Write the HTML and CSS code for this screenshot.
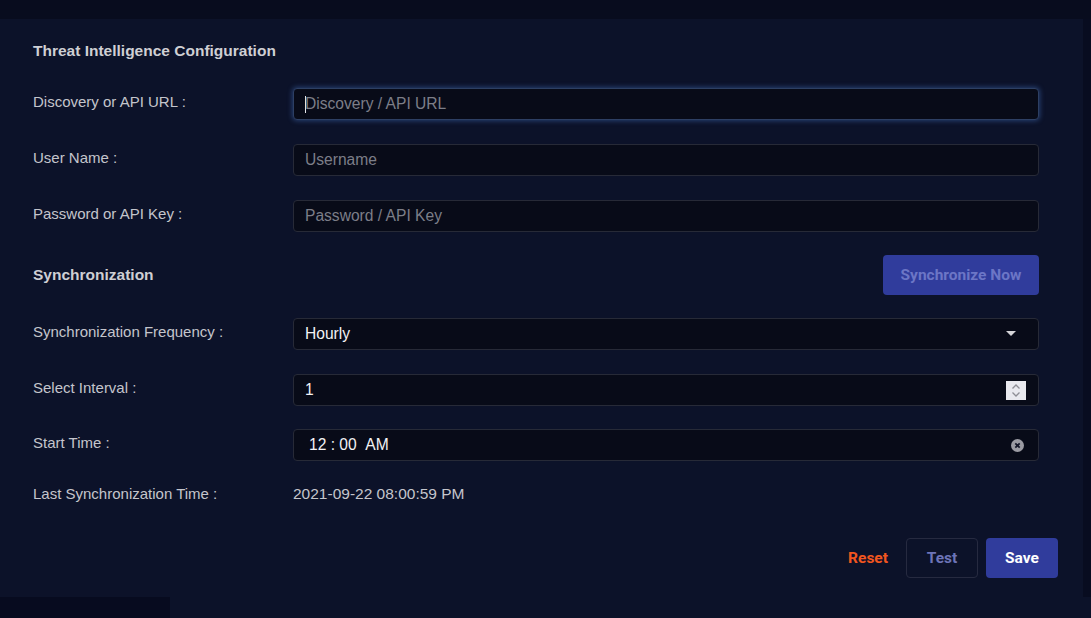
FILE: index.html
```html
<!DOCTYPE html>
<html>
<head>
<meta charset="utf-8">
<link rel="stylesheet" href="styles.css">
</head>
<body>
<div class="topbar"></div>
<div class="shell">
  <div class="panel">
    <h2 class="heading">Threat Intelligence Configuration</h2>
    <div class="row">
      <div class="label">Discovery or API URL :</div>
      <div class="control focused"><span class="caret"></span><span class="placeholder">Discovery / API URL</span></div>
    </div>
    <div class="row">
      <div class="label">User Name :</div>
      <div class="control"><span class="placeholder">Username</span></div>
    </div>
    <div class="row">
      <div class="label">Password or API Key :</div>
      <div class="control"><span class="placeholder">Password / API Key</span></div>
    </div>
    <div class="sync-row">
      <h2 class="heading">Synchronization</h2>
      <button class="btn btn-primary disabled">Synchronize Now</button>
    </div>
    <div class="row">
      <div class="label">Synchronization Frequency :</div>
      <div class="control"><span class="value">Hourly</span>
        <svg class="caret-down" width="10" height="6" viewBox="0 0 10 6"><path d="M0 0h10L5 5z" fill="#d4d4d8"/></svg>
      </div>
    </div>
    <div class="row tight">
      <div class="label">Select Interval :</div>
      <div class="control"><span class="value">1</span>
        <span class="spinner"><svg width="20" height="19" viewBox="0 0 20 19"><path d="M6.5 7.5L10 4l3.5 3.5M6.5 11.5L10 15l3.5-3.5" fill="none" stroke="#8e8e96" stroke-width="1.3"/></svg></span>
      </div>
    </div>
    <div class="row tight">
      <div class="label">Start Time :</div>
      <div class="control time"><span class="value">12 : 00&nbsp;&nbsp;AM</span>
        <svg class="clear" width="13" height="13" viewBox="0 0 13 13"><circle cx="6.5" cy="6.5" r="6.5" fill="#9b9ba3"/><path d="M4.3 4.3l4.4 4.4M8.7 4.3l-4.4 4.4" stroke="#15182a" stroke-width="1.7"/></svg>
      </div>
    </div>
    <div class="info-row">
      <div class="label">Last Synchronization Time :</div>
      <div class="info-value">2021-09-22 08:00:59 PM</div>
    </div>
    <div class="footer">
      <button class="btn btn-link">Reset</button>
      <button class="btn btn-outline">Test</button>
      <button class="btn btn-primary">Save</button>
    </div>
  </div>
  <div class="side-strip"></div>
</div>
<div class="bottom">
  <div class="bottom-block"></div>
</div>
</body>
</html>
```
FILE: styles.css
```css
* { box-sizing: border-box; }
html, body { margin: 0; padding: 0; }
body {
  background: #0c1229;
  font-family: "Liberation Sans", Arial, sans-serif;
  width: 1091px;
  height: 618px;
  overflow: hidden;
}
.topbar { height: 19px; background: #080c1e; }
.shell { display: flex; height: 578px; }
.panel {
  width: 1083px;
  background: #0c1229;
  padding: 22px 0 0 33px;
}
.side-strip { flex: 1; background: #080c20; }
.bottom { height: 21px; background: #0c1229; display: flex; }
.bottom-block { width: 170px; background: #070b1f; }

.heading {
  margin: 0;
  font-size: 15.5px;
  line-height: 20px;
  font-weight: bold;
  color: #cfcfd4;
}
.panel > .heading { margin-bottom: 27px; }

.row {
  display: flex;
  align-items: flex-start;
  margin-bottom: 24px;
  width: 1006px;
}
.row.tight { margin-bottom: 23px; }
.label {
  width: 260px;
  flex: none;
  font-size: 15px;
  line-height: 20px;
  padding-top: 4px;
  color: #c4c5cc;
}
.control {
  flex: 1;
  height: 32px;
  background: #080b18;
  border: 1px solid #272a37;
  border-radius: 4px;
  display: flex;
  align-items: center;
  padding: 0 11px;
  font-size: 15.6px;
}
.control.focused {
  border-color: #2d3f63;
  box-shadow: 0 0 5px 1px rgba(70, 120, 200, 0.45);
}
.caret {
  width: 1px;
  height: 17px;
  background: #e6e6ea;
  margin-right: -1px;
}
.placeholder { color: #7c7e88; }
.value { color: #f2f2f4; }
.control.time { padding-left: 15px; }
.caret-down { margin-left: auto; margin-right: 11px; }
.spinner {
  margin-left: auto;
  margin-right: 1px;
  width: 20px;
  height: 19px;
  background: #e9e9ef;
  display: flex;
}
.clear { margin-left: auto; margin-right: 3px; }

.sync-row {
  display: flex;
  align-items: center;
  justify-content: space-between;
  width: 1006px;
  height: 40px;
  margin-top: -1px;
  margin-bottom: 23px;
}
.btn {
  font-family: Roboto, "Liberation Sans", sans-serif;
  font-weight: bold;
  font-size: 15.5px;
  border-radius: 4px;
  height: 40px;
  border: 1px solid transparent;
  cursor: pointer;
  padding: 0;
}
.btn-primary { background: #303c9c; color: #ffffff; }
.btn-primary.disabled { width: 156px; color: #6c76c6; }
.info-row {
  display: flex;
  width: 1006px;
}
.info-row .label { padding-top: 0; }
.info-value {
  font-size: 15.5px;
  line-height: 20px;
  color: #c4c5cc;
}
.footer {
  display: flex;
  justify-content: flex-end;
  align-items: center;
  width: 1025px;
  margin-top: 34px;
}
.btn-link {
  background: none;
  color: #f2561f;
  margin-right: 17px;
}
.btn-outline {
  background: transparent;
  border-color: #262a40;
  color: #6d74b8;
  width: 72px;
  margin-right: 8px;
}
.footer .btn-primary { width: 72px; }
```
